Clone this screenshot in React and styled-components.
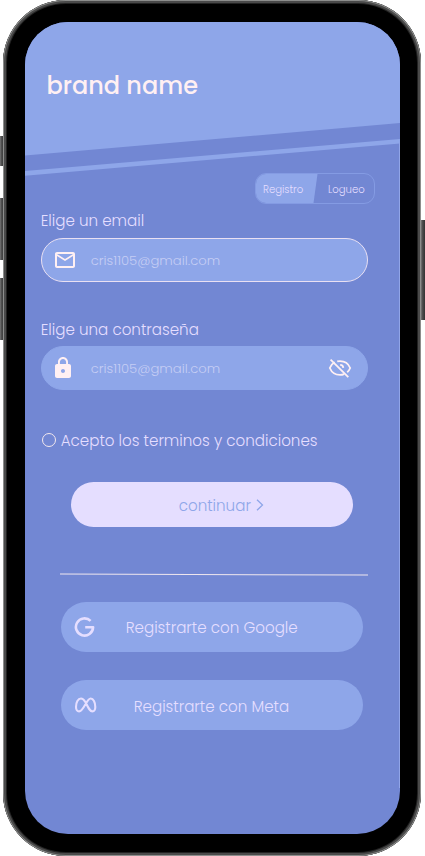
import React from "react";
import styled, { createGlobalStyle } from "styled-components";
import { MdOutlineEmail, MdLock } from "react-icons/md";

const GlobalStyle = createGlobalStyle`
  *, *::before, *::after { box-sizing: border-box; }
  body { margin: 0; background: #fff; overflow: hidden; }
  button, input { font: inherit; color: inherit; border: 0; background: none; padding: 0; }
`;

const Stage = styled.div`
  position: relative;
  width: 425px;
  height: 856px;
  padding: 0 4px 0 3px;
  overflow: hidden;
  font-family: Poppins, Inter, sans-serif;
  font-feature-settings: "cv11" 1;
  font-weight: 300;
  font-size: 15.12px;
  color: #e5deff;
`;

const SideKey = styled.i`
  position: absolute;
  ${(p) => (p.$right ? "right: 0" : "left: 0")};
  top: ${(p) => p.$top}px;
  width: 4px;
  height: ${(p) => p.$height}px;
  background: linear-gradient(90deg, #777 0, #4c4c4c 40%, #333 100%);
`;

const Body = styled.div`
  position: relative;
  width: 418px;
  height: 856px;
  padding: 22px 21px 22px 22px;
  border-radius: 63px;
  background: #000;
  box-shadow: inset 0 0 0 1px #8c8d8c, inset 0 0 0 3px #4a4a4a, inset 0 0 0 4px #222;
`;

const Screen = styled.main`
  position: relative;
  display: flex;
  flex-direction: column;
  width: 375px;
  height: 812px;
  border-radius: 43px;
  overflow: hidden;
  background: #7287d3;
  &::after {
    content: "";
    position: absolute;
    right: 0;
    top: 120px;
    bottom: 46px;
    width: 1px;
    background: #91a5e7;
  }
`;

const Header = styled.header`
  position: relative;
  flex: none;
  height: 154px;
  padding: 44.6px 21.5px 0;
  &::before, &::after {
    content: "";
    position: absolute;
    inset: 0;
    background: #8ea6e9;
  }
  &::before { clip-path: polygon(0 0, 100% 0, 100% 101px, 0 133.5px); }
  &::after { clip-path: polygon(0 149px, 100% 117px, 100% 121.5px, 0 153.7px); }
`;

const Brand = styled.h1`
  position: relative;
  z-index: 1;
  margin: 0;
  font-size: 24px;
  line-height: 38px;
  font-weight: 500;
  color: #fff0f3;
  white-space: nowrap;
`;

const Toggle = styled.nav`
  align-self: flex-end;
  flex: none;
  display: flex;
  width: 120.5px;
  height: 31px;
  margin: -3px 25px 0 0;
  border: 1px solid #849be3;
  border-radius: 11px;
  overflow: hidden;
  font-size: 10.1px;
`;

const Tab = styled.button`
  height: 100%;
  padding: 2px 0 0 ${(p) => p.$pad}px;
  width: ${(p) => p.$width}px;
  text-align: left;
  white-space: nowrap;
  ${(p) => p.$active && "background: #8ea6e9; clip-path: polygon(0 0, 100% 0, 58px 100%, 0 100%);"}
`;

const Form = styled.form`
  display: flex;
  flex-direction: column;
  padding: 0 32px 0 15.7px;
`;

const Label = styled.label`
  height: 24px;
  line-height: 24px;
  margin-top: ${(p) => p.$gap}px;
  white-space: nowrap;
`;

const Field = styled.div`
  display: flex;
  align-items: center;
  width: 327px;
  height: 44px;
  margin-top: ${(p) => p.$gap}px;
  padding: 0 15px 0 ${(p) => p.$inset}px;
  border-radius: 22px;
  background: #8ea6e9;
  border: 1px solid ${(p) => (p.$focused ? "#e9e0f2" : "#8ea6e9")};
  color: #fff0f3;
  > svg { flex: none; }
`;

const Input = styled.input`
  flex: 1;
  min-width: 0;
  height: 100%;
  margin-left: ${(p) => p.$gap}px;
  padding-top: ${(p) => p.$drop || 0}px;
  outline: 0;
  font-size: 13.2px;
  &::placeholder { color: #c5cdf4; opacity: 1; }
`;

const Terms = styled.label`
  display: flex;
  align-items: center;
  gap: 5px;
  height: 24px;
  margin: 38px 0 0 1px;
  white-space: nowrap;
`;

const Radio = styled.span`
  flex: none;
  width: 14px;
  height: 14px;
  border: 1px solid #f3e9ee;
  border-radius: 50%;
`;

const Continue = styled.button`
  display: flex;
  align-items: center;
  width: 282px;
  height: 45px;
  margin: 30px 0 0 30px;
  padding: 1px 0 0 108px;
  border-radius: 23px;
  background: #e5deff;
  color: #8ea6e9;
  svg { margin-left: 5px; }
`;

const Divider = styled.hr`
  flex: none;
  width: 308px;
  height: 1px;
  margin: 47px 0 0 35px;
  border: 0;
  background: #eee6ee;
  transform: rotate(0.22deg);
`;

const Providers = styled.section`
  display: flex;
  flex-direction: column;
  gap: 28px;
  padding: 27px 0 0 35.7px;
`;

const Provider = styled.button`
  display: grid;
  grid-template-columns: ${(p) => p.$lead}px auto;
  align-items: center;
  justify-content: start;
  width: 302px;
  height: 50px;
  padding: ${(p) => p.$drop}px 0 0 13px;
  border-radius: 25px;
  background: #8ea6e9;
  text-align: left;
  white-space: nowrap;
  svg { margin-bottom: ${(p) => p.$drop}px; }
`;

const EyeOff = () => (
  <svg width="24" height="24" viewBox="0 0 24 24" fill="none" stroke="currentColor" strokeWidth="1.8">
    <path d="M6.7 6.3C4.4 7.5 2.8 9.6 1.8 12c1.7 4.1 5.7 6.9 10.2 6.9 1.5 0 2.9-.3 4.2-.8M9.2 5.4c.9-.2 1.8-.3 2.8-.3 4.5 0 8.5 2.8 10.2 6.9-.7 1.7-1.7 3.1-3 4.2" />
    <path d="M12.2 8.8c1.8.1 3 1.4 3.1 3.1" />
    <path d="M2.6 3.7 20.3 21.2" />
  </svg>
);

const Chevron = () => (
  <svg width="8" height="12" viewBox="0 0 8 12" fill="none" stroke="currentColor" strokeWidth="1.3">
    <path d="M1 .7 6.5 6 1 11.3" />
  </svg>
);

const GoogleMark = () => (
  <svg width="22" height="22" viewBox="0 0 22 22" fill="none" stroke="currentColor" strokeWidth="2.6" strokeLinejoin="round">
    <path d="M16.6 4.9A8.6 8.6 0 1 0 19.1 11.3H11.2" />
  </svg>
);

const MetaMark = () => (
  <svg width="23" height="16" viewBox="0 0 23 16" fill="none" stroke="currentColor" strokeWidth="2.1" strokeLinejoin="round">
    <path d="M11.5 5.2C9.9 2.7 8.6 1.5 7 1.5 4 1.5 2 5.6 2 9.9c0 2.9 1.2 4.5 3.1 4.5 2 0 3.2-1.6 6.4-7.2 2.3-4.1 3.4-5.7 5.2-5.7 2.6 0 4.6 4 4.6 8.4 0 2.9-1.1 4.5-2.9 4.5-2.1 0-3.2-1.8-6.9-9.2Z" />
  </svg>
);

export default function App() {
  return (
    <>
      <GlobalStyle />
      <Stage>
        <SideKey $top={136} $height={30} />
        <SideKey $top={198} $height={62} />
        <SideKey $top={278} $height={62} />
        <SideKey $right $top={220} $height={100} />
        <Body>
          <Screen>
            <Header>
              <Brand>brand name</Brand>
            </Header>
            <Toggle>
              <Tab $active type="button" $pad={7.5} $width={62}>Registro</Tab>
              <Tab type="button" $pad={10.5} $width={56}>Logueo</Tab>
            </Toggle>
            <Form>
              <Label $gap={5} htmlFor="email">Elige un email</Label>
              <Field $focused $gap={5} $inset={11}>
                <MdOutlineEmail size={24} />
                <Input id="email" placeholder="cris1105@gmail.com" $gap={14} $drop={1} />
              </Field>
              <Label $gap={36} htmlFor="password">Elige una contraseña</Label>
              <Field $gap={4} $inset={9}>
                <MdLock size={24} />
                <Input id="password" placeholder="cris1105@gmail.com" $gap={16} $drop={2} />
                <EyeOff />
              </Field>
              <Terms>
                <Radio />
                Acepto los terminos y condiciones
              </Terms>
              <Continue type="button">
                continuar
                <Chevron />
              </Continue>
            </Form>
            <Divider />
            <Providers>
              <Provider type="button" $lead={52} $drop={1}>
                <GoogleMark />
                Registrarte con Google
              </Provider>
              <Provider type="button" $lead={60} $drop={2}>
                <MetaMark />
                Registrarte con Meta
              </Provider>
            </Providers>
          </Screen>
        </Body>
      </Stage>
    </>
  );
}
